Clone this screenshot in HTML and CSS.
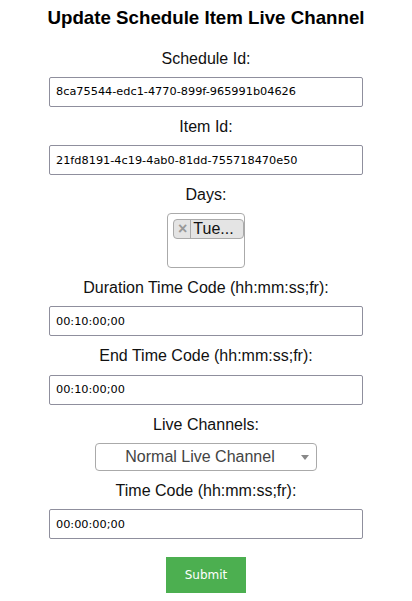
FILE: index.html
```html
<!DOCTYPE html>
<html>
<head>
<meta charset="utf-8">
<link rel="stylesheet" href="styles.css">
</head>
<body>
<div class="page">
  <h3 class="title">Update Schedule Item Live Channel</h3>
  <form class="form">
    <label class="label">Schedule Id:</label>
    <input class="field" type="text" value="8ca75544-edc1-4770-899f-965991b04626">
    <label class="label">Item Id:</label>
    <input class="field" type="text" value="21fd8191-4c19-4ab0-81dd-755718470e50">
    <label class="label">Days:</label>
    <div class="multi">
      <span class="tag"><span class="tag-x">×</span><span class="tag-text">Tue...</span></span>
    </div>
    <label class="label">Duration Time Code (hh:mm:ss;fr):</label>
    <input class="field" type="text" value="00:10:00;00">
    <label class="label">End Time Code (hh:mm:ss;fr):</label>
    <input class="field" type="text" value="00:10:00;00">
    <label class="label">Live Channels:</label>
    <div class="single">
      <span class="single-text">Normal Live Channel</span>
      <span class="arrow"></span>
    </div>
    <label class="label">Time Code (hh:mm:ss;fr):</label>
    <input class="field" type="text" value="00:00:00;00">
    <button class="submit" type="button">Submit</button>
  </form>
</div>
</body>
</html>
```

FILE: styles.css
```css
html, body {
  margin: 0;
  padding: 0;
  background: #ffffff;
}
.page {
  padding-top: 7px;
  font-family: "Liberation Sans", Arial, sans-serif;
  color: #000;
  text-align: center;
}
.title {
  margin: 0 0 10px 0;
  font-size: 18.72px;
  font-weight: bold;
  line-height: 21.5px;
}
.form {
  display: flex;
  flex-direction: column;
  align-items: center;
}
.label {
  display: block;
  font-size: 16px;
  line-height: 18.4px;
  margin: 11px 0 9px 0;
  color: #111;
}
.field {
  box-sizing: border-box;
  width: 314px;
  height: 30px;
  margin: 0;
  padding: 0 6px;
  border: 1px solid #8f8f9d;
  border-radius: 2px;
  font-family: "DejaVu Sans", Verdana, sans-serif;
  font-size: 11.3px;
  color: #000;
  background: #fff;
  outline: none;
}
.multi {
  box-sizing: border-box;
  width: 78px;
  height: 55px;
  margin-top: -1px;
  border: 1px solid #aaa;
  border-radius: 4px;
  padding: 5px 0 0 5px;
  display: flex;
  align-items: flex-start;
  background: #fff;
}
.tag {
  box-sizing: border-box;
  display: flex;
  align-items: center;
  height: 20px;
  width: 71px;
  background: #e4e4e4;
  border: 1px solid #aaa;
  border-radius: 4px;
  overflow: hidden;
}
.tag-x {
  color: #999;
  font-weight: bold;
  font-size: 16px;
  line-height: 18px;
  padding: 0 3px 0 4px;
  border-right: 1px solid #aaa;
}
.tag-text {
  font-size: 16px;
  line-height: 18px;
  padding-left: 2px;
  color: #111;
  white-space: nowrap;
}
.single {
  box-sizing: border-box;
  position: relative;
  width: 222px;
  height: 28px;
  border: 1px solid #aaa;
  border-radius: 4px;
  display: flex;
  align-items: center;
  justify-content: center;
  padding: 0 20px 0 8px;
  background: #fff;
}
.single-text {
  font-size: 16px;
  color: #444;
  line-height: 26px;
}
.arrow {
  position: absolute;
  right: 7px;
  top: 11px;
  width: 0;
  height: 0;
  border-left: 4px solid transparent;
  border-right: 4px solid transparent;
  border-top: 5px solid #888;
}
.submit {
  margin-top: 18px;
  width: 80px;
  height: 36px;
  border: none;
  background: #4caf50;
  color: #fff;
  font-family: "DejaVu Sans", Verdana, sans-serif;
  font-size: 12px;
  cursor: pointer;
}
```
